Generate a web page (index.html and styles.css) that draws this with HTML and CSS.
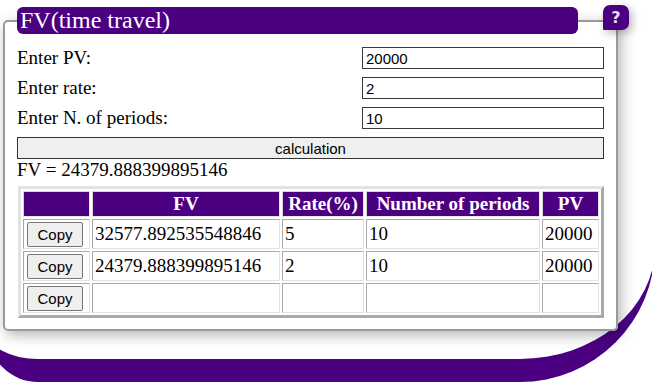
FILE: index.html
```html
<!DOCTYPE html>
<html>
<head>
<meta charset="utf-8">
<link rel="stylesheet" href="styles.css">
</head>
<body>
<div class="stage">
  <fieldset class="panel">
    <legend class="title">FV(time travel)</legend>
    <div class="row"><label class="lbl">Enter PV:</label><input class="field" type="text" value="20000"></div>
    <div class="row"><label class="lbl">Enter rate:</label><input class="field" type="text" value="2"></div>
    <div class="row"><label class="lbl">Enter N. of periods:</label><input class="field" type="text" value="10"></div>
    <button class="calc">calculation</button>
    <div class="result">FV = 24379.888399895146</div>
    <table class="grid">
      <thead>
        <tr class="head">
          <th class="c1"></th>
          <th class="c2">FV</th>
          <th class="c3">Rate(%)</th>
          <th class="c4">Number of periods</th>
          <th class="c5">PV</th>
        </tr>
      </thead>
      <tbody>
        <tr>
          <td><button class="copy">Copy</button></td>
          <td>32577.892535548846</td>
          <td>5</td>
          <td>10</td>
          <td>20000</td>
        </tr>
        <tr>
          <td><button class="copy">Copy</button></td>
          <td>24379.888399895146</td>
          <td>2</td>
          <td>10</td>
          <td>20000</td>
        </tr>
        <tr>
          <td><button class="copy">Copy</button></td>
          <td></td>
          <td></td>
          <td></td>
          <td></td>
        </tr>
      </tbody>
    </table>
  </fieldset>
  <span class="help">?</span>
</div>
</body>
</html>
```

FILE: styles.css
```css
html, body {
  margin: 0;
  padding: 0;
  overflow: hidden;
  background: #fff;
}

.stage {
  position: relative;
  box-sizing: border-box;
  width: 667px;
  margin-left: -12px;
  padding: 7px 0 28px 15px;
  border-bottom: 23px solid #4b0082;
  border-bottom-left-radius: 50px;
  border-bottom-right-radius: 135px;
}

.panel {
  box-sizing: border-box;
  width: 614px;
  margin: 0;
  padding: 13px 12px 11px 12px;
  border: 2px solid #9a9a9a;
  border-radius: 5px;
  background: #fff;
  box-shadow: 3px 4px 14px rgba(0, 0, 0, 0.3);
  font-family: "Liberation Serif", "Times New Roman", serif;
  font-size: 19px;
  color: #000;
}

.title {
  box-sizing: border-box;
  width: 561px;
  height: 27px;
  padding: 0 3px;
  margin: 0;
  background: #4b0082;
  color: #fff;
  font-family: "Liberation Serif", "Times New Roman", serif;
  font-size: 24px;
  line-height: 27px;
  border-radius: 6px;
}

.row {
  display: flex;
  justify-content: space-between;
  align-items: center;
  height: 22px;
  margin-bottom: 8px;
}

.lbl {
  line-height: 22px;
}

.field {
  box-sizing: border-box;
  width: 242px;
  height: 22px;
  margin: 0;
  padding: 0 3px;
  border: 1px solid #3a3a3a;
  font-family: "Liberation Sans", Arial, sans-serif;
  font-size: 15px;
  color: #000;
  background: #fff;
}

.calc {
  display: block;
  box-sizing: border-box;
  width: 100%;
  height: 22px;
  margin: 0;
  padding: 0;
  border: 1px solid #333;
  background: #efefef;
  font-family: "Liberation Sans", Arial, sans-serif;
  font-size: 15px;
  color: #000;
}

.result {
  height: 22px;
  line-height: 22px;
  margin-bottom: 5px;
}

.grid {
  box-sizing: border-box;
  width: 586px;
  margin-left: 1px;
  table-layout: fixed;
  border-collapse: separate;
  border-spacing: 2px;
  border: 3px solid;
  border-color: #e2e2e2 #a9a9a9 #a9a9a9 #e2e2e2;
}

.grid th,
.grid td {
  box-sizing: border-box;
  padding: 1px 2px;
  border: 1px solid;
  border-color: #a9a9a9 #e2e2e2 #e2e2e2 #a9a9a9;
  font-family: "Liberation Serif", "Times New Roman", serif;
  font-size: 19px;
  text-align: left;
  white-space: nowrap;
  overflow: hidden;
}

.grid td {
  height: 30px;
  vertical-align: middle;
}

.grid th {
  height: 26px;
  background: #4b0082;
  color: #fff;
  font-weight: bold;
  text-align: center;
  border-color: #d6d6d6 #e6e6e6 #e6e6e6 #d6d6d6;
}

.c1 { width: 67px; }
.c2 { width: 188px; }
.c3 { width: 82px; }
.c4 { width: 174px; }
.c5 { width: 57px; }

.copy {
  display: block;
  box-sizing: border-box;
  width: 56px;
  height: 25px;
  margin: 0 0 0 1px;
  padding: 0;
  border: 1px solid #767676;
  border-radius: 2px;
  background: #efefef;
  font-family: "Liberation Sans", Arial, sans-serif;
  font-size: 15px;
  color: #000;
}

.help {
  position: absolute;
  left: 615px;
  top: 5px;
  width: 26px;
  height: 25px;
  box-sizing: border-box;
  background: #4b0082;
  color: #e6dcf5;
  border-radius: 7px 7px 7px 1px;
  font-family: "DejaVu Sans", sans-serif;
  font-weight: bold;
  font-size: 16px;
  line-height: 25px;
  text-align: center;
  box-shadow: 3px 3px 8px rgba(0, 0, 0, 0.28);
}
```
